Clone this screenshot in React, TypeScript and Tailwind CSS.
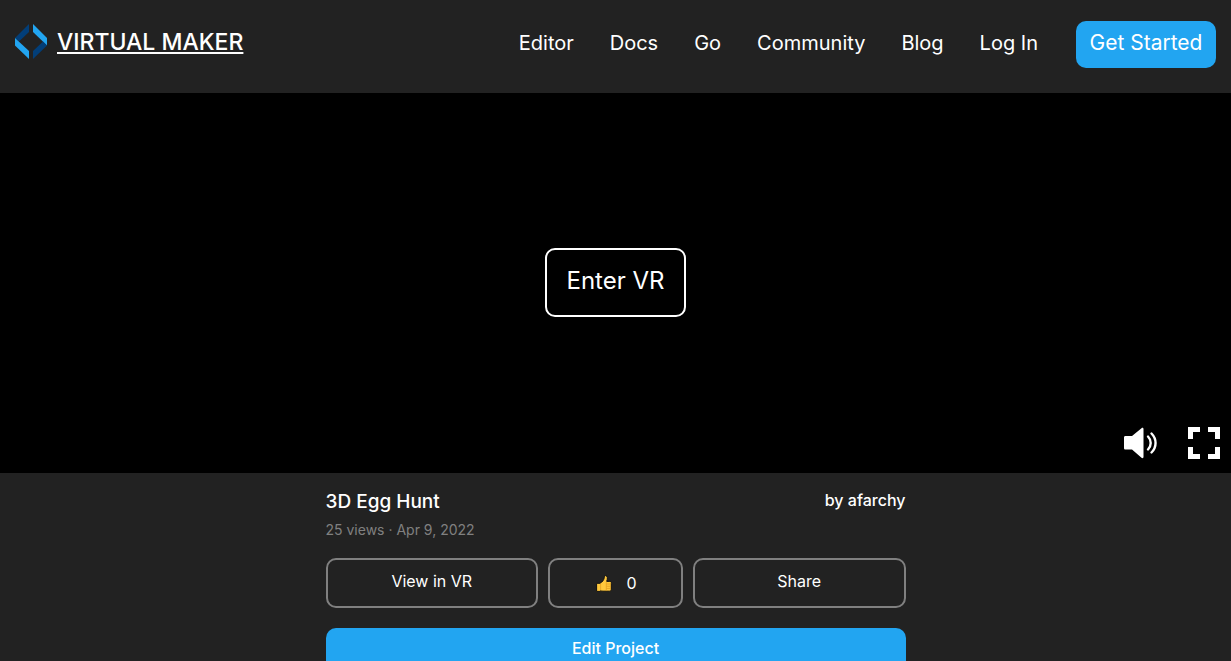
const navLinks = ['Editor', 'Docs', 'Go', 'Community', 'Blog', 'Log In'];

function Logo() {
  return (
    <svg width="32" height="35" viewBox="0 0 32 35" aria-hidden="true">
      <path fill="#023e78" d="M14 0v8L4 17.5 0 14z" />
      <path fill="#22a5f1" d="M0 14l14 13v8L0 21.5z" />
      <path fill="#22a5f1" d="M18 0l14 14v7.5L18 8z" />
      <path fill="#023e78" d="M32 21.5L18 35v-8l10-9.5z" />
    </svg>
  );
}

function VolumeIcon() {
  return (
    <svg width="33" height="32" viewBox="0 0 33 32" aria-hidden="true">
      <path
        fill="#fff"
        d="M1.5 9H8L17.500 1.200c.9-.7 2-.3 2 .8v28c0 1.100-1.100 1.500-2 .8L8 22.500H1.500C.6 22.500 0 22 0 21V10.500C0 9.500.6 9 1.500 9z"
      />
      <g fill="none" stroke="#fff" strokeWidth="2.400" strokeLinecap="round">
        <path d="M24 9.500c3.600 3.700 3.600 9.300 0 13" />
        <path d="M27.500 6.500c5.400 5.400 5.400 13.600 0 19" />
      </g>
    </svg>
  );
}

function FullscreenIcon() {
  return (
    <svg width="32" height="32" viewBox="0 0 32 32" fill="#fff" aria-hidden="true">
      <path d="M0 0h12v5H5v7H0zM20 0h12v12h-5V5h-7zM0 20h5v7h7v5H0zM27 20h5v12H20v-5h7z" />
    </svg>
  );
}

function ThumbIcon() {
  return (
    <svg width="16" height="17" viewBox="0 0 16 17" aria-hidden="true">
      <path
        fill="#ffc83d"
        stroke="#111"
        strokeWidth="1"
        strokeLinejoin="round"
        d="M.6 8.300h3.400c2.400-1.300 3.900-3.200 4.300-5.800.2-1.500.7-2 1.500-1.800 1.800.4 2 2.700.9 5.700h3.100c1.200 0 1.900 1 1.500 2v5.800c0 1.400-.7 2-2 2H7c-1 0-1.700-.1-2.400-.5v.7H.6z"
      />
      <path
        fill="none"
        stroke="#e09a1a"
        strokeWidth=".7"
        d="M4.600 8.800v6.400M10.300 6.800v8.800M10.500 9h4.500M10.500 11.200h4.500M10.500 13.400h4.500"
      />
    </svg>
  );
}

function Header() {
  return (
    <header className="flex items-start justify-between px-[15px] pt-[21px] pb-[25px]">
      <a href="#home" className="flex items-start gap-[10px] pt-[3px]">
        <Logo />
        <span className="text-[23px] leading-9 font-medium underline decoration-2 underline-offset-2">
          VIRTUAL MAKER
        </span>
      </a>
      <div className="flex items-center gap-[38px]">
        <nav className="flex gap-9 pb-[3px] text-xl">
          {navLinks.map((label) => (
            <a key={label} href="#nav">
              {label}
            </a>
          ))}
        </nav>
        <button className="w-[140px] h-[47px] pb-[3px] rounded-[10px] bg-[#22a5f1] text-[21px] whitespace-nowrap">
          Get Started
        </button>
      </div>
    </header>
  );
}

function Viewer() {
  return (
    <section className="relative flex items-center justify-center h-[380px] pb-[2px] bg-black">
      <button className="w-[141px] h-[69px] pb-[3px] rounded-[10px] border-2 border-white text-2xl">
        Enter VR
      </button>
      {/* Player controls */}
      <div className="absolute right-[11px] bottom-[14px] flex items-center gap-[31px]">
        <button aria-label="Sound">
          <VolumeIcon />
        </button>
        <button aria-label="Fullscreen">
          <FullscreenIcon />
        </button>
      </div>
    </section>
  );
}

export default function App() {
  return (
    <div className="min-h-screen bg-[#222] text-white font-['Inter',sans-serif]">
      <Header />
      <main>
        <Viewer />
        <section className="w-full max-w-[580px] mx-auto pt-[15px]">
          <div className="flex items-start justify-between">
            <h1 className="text-[19px] leading-7 font-medium">3D Egg Hunt</h1>
            <a href="#author" className="text-base font-medium">
              by afarchy
            </a>
          </div>
          <p className="mt-1 text-sm text-[#808080]">25 views · Apr 9, 2022</p>

          <div className="flex gap-[10px] mt-[18px] text-base">
            <button className="flex-1 h-[50px] pb-1 rounded-[10px] border-2 border-[#808080]">
              View in VR
            </button>
            <button className="flex items-center justify-center gap-[14px] w-[135px] h-[50px] pl-[2px] rounded-[10px] border-2 border-[#808080]">
              <ThumbIcon />
              <span>0</span>
            </button>
            <button className="flex-1 h-[50px] pb-1 rounded-[10px] border-2 border-[#808080]">
              Share
            </button>
          </div>

          <button className="w-full h-11 mt-5 pb-[5px] rounded-[10px] bg-[#22a5f1] text-base font-medium">
            Edit Project
          </button>
        </section>
      </main>
    </div>
  );
}
